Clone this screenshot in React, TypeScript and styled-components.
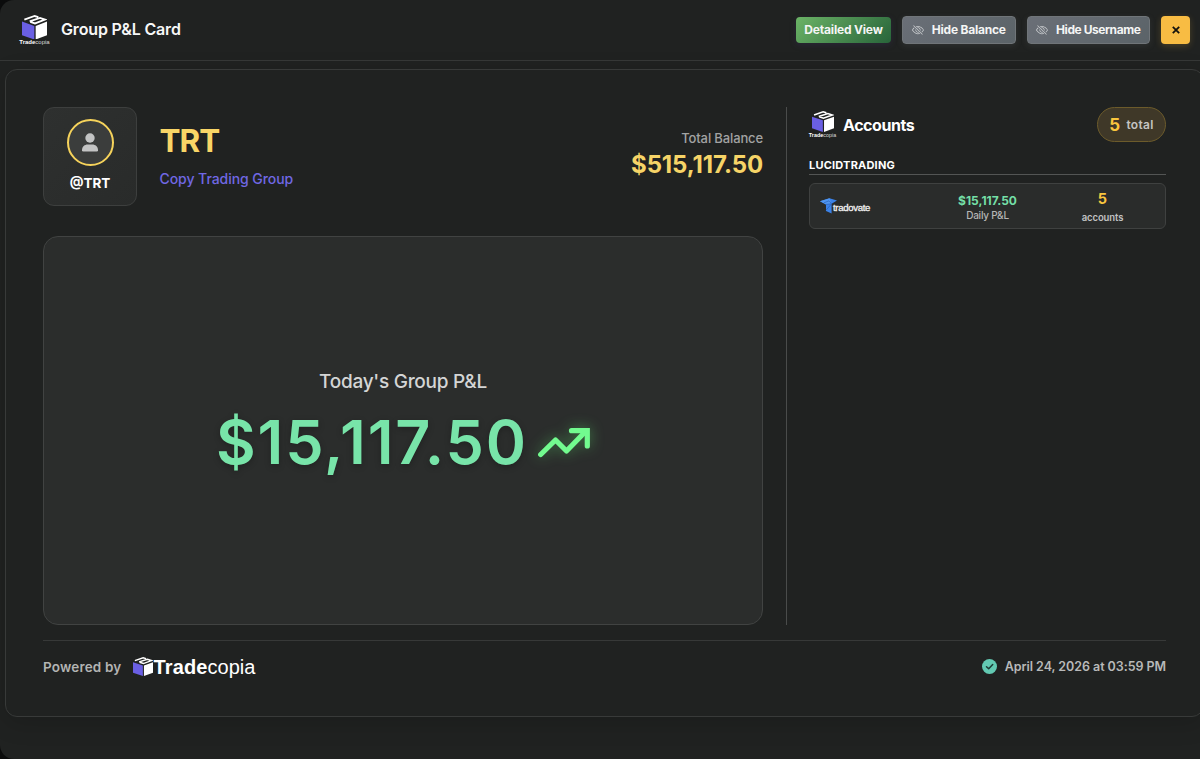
import React from "react";
import styled, { createGlobalStyle } from "styled-components";
import { BsEyeSlash } from "react-icons/bs";

const GlobalStyle = createGlobalStyle`
  * { box-sizing: border-box; }
  body {
    margin: 0;
    background: #0b0c0c;
    font-family: Inter, "Liberation Sans", sans-serif;
    -webkit-font-smoothing: antialiased;
  }
`;

const Modal = styled.div`
  width: 1200px;
  height: 759px;
  display: flex;
  flex-direction: column;
  overflow: hidden;
  background: #202221;
  border-radius: 14px 0 0 14px;
`;

const Header = styled.header`
  height: 61px;
  flex: none;
  display: flex;
  align-items: center;
  justify-content: space-between;
  padding: 0 10px 0 19px;
  border-bottom: 1px solid #363837;
`;

const TitleGroup = styled.div`
  display: flex;
  align-items: center;
  gap: 11px;
`;

const Title = styled.h1`
  margin: 0 0 2px;
  font-size: 16px;
  line-height: 20px;
  font-weight: 600;
  letter-spacing: -0.16px;
  color: #f7f7f7;
`;

const LogoBox = styled.div<{ $width: number }>`
  width: ${(p) => p.$width}px;
  display: flex;
  flex-direction: column;
  align-items: center;
`;

const LogoName = styled.span<{ $size: number }>`
  font: 400 ${(p) => p.$size}px/6px "Liberation Sans", sans-serif;
  color: #dadada;
  white-space: nowrap;
  b { font-weight: 700; color: #fff; }
`;

const Actions = styled.div`
  display: flex;
  align-items: center;
  gap: 11px;
`;

const Button = styled.button`
  height: 28px;
  padding: 0;
  display: flex;
  align-items: center;
  justify-content: center;
  border: 0;
  border-radius: 4px;
  font: 650 12px/16px Inter, sans-serif;
  color: #f4f5f4;
  white-space: nowrap;
`;

const DetailButton = styled(Button)`
  width: 95px;
  height: 26px;
  letter-spacing: -0.18px;
  background: linear-gradient(135deg, #6bb366 0%, #28643a 100%);
  box-shadow: 0 2px 6px rgba(70, 50, 120, 0.25);
`;

const ToggleButton = styled(Button)<{ $width: number; $tracking: number }>`
  width: ${(p) => p.$width}px;
  gap: 8px;
  letter-spacing: ${(p) => p.$tracking}px;
  border: 1px solid #707579;
  background: linear-gradient(135deg, #6a6f77, #5b6368);
  box-shadow: 0 2px 6px rgba(110, 115, 120, 0.18);
  svg { color: #c9cccf; }
`;

const CloseButton = styled(Button)`
  width: 29px;
  background: #f8bc43;
  box-shadow: 0 2px 7px rgba(248, 188, 67, 0.2);
`;

const Card = styled.main`
  width: 1199px;
  height: 648px;
  flex: none;
  margin: 8px 0 0 5px;
  padding: 37px 37px 0;
  display: flex;
  flex-direction: column;
  border: 1px solid #383a39;
  border-radius: 12px;
  background: #202221;
  box-shadow: 0 6px 24px rgba(0, 0, 0, 0.16);
`;

const Columns = styled.div`
  height: 518px;
  flex: none;
  display: grid;
  grid-template-columns: 744px 357px;
  column-gap: 22px;
`;

const Summary = styled.section`
  display: flex;
  flex-direction: column;
  gap: 30px;
  padding-right: 23px;
  border-right: 1px solid #4a4c4b;
`;

const GroupHeader = styled.div`
  height: 99px;
  display: flex;
`;

const UserCard = styled.div`
  width: 94px;
  display: flex;
  flex-direction: column;
  align-items: center;
  padding-top: 11px;
  border: 1px solid #3d3f3e;
  border-radius: 11px;
  background: linear-gradient(135deg, #2e302f, #292b2a);
`;

const Avatar = styled.div`
  width: 47px;
  height: 47px;
  display: flex;
  align-items: center;
  justify-content: center;
  border: 2px solid #f6d35b;
  border-radius: 50%;
  background: #3b3d3c;
`;

const Handle = styled.span`
  margin-top: 8px;
  font-size: 13.5px;
  line-height: 18px;
  font-weight: 700;
  color: #fff;
`;

const GroupInfo = styled.div`
  flex: 1;
  padding: 14px 0 0 22.5px;
`;

const GroupName = styled.h2`
  margin: 0;
  font-size: 31.5px;
  line-height: 40px;
  font-weight: 650;
  letter-spacing: -1px;
  color: #f9d566;
`;

const GroupType = styled.div`
  margin-top: 9px;
  font-size: 14px;
  line-height: 18px;
  font-weight: 550;
  letter-spacing: -0.06px;
  color: #7068e4;
`;

const Balance = styled.div`
  padding-top: 22px;
  text-align: right;
`;

const BalanceLabel = styled.div`
  font-size: 13px;
  line-height: 18px;
  font-weight: 550;
  letter-spacing: -0.13px;
  color: #a2a3a3;
`;

const BalanceValue = styled.div`
  margin-top: 4px;
  font-size: 24px;
  line-height: 28px;
  font-weight: 650;
  letter-spacing: -0.1px;
  color: #f6d467;
`;

const PnlPanel = styled.div`
  flex: 1;
  display: flex;
  flex-direction: column;
  align-items: center;
  padding-top: 132px;
  border: 1px solid #414342;
  border-radius: 15px;
  background: #2b2d2c;
`;

const PnlLabel = styled.div`
  font-size: 19px;
  line-height: 26px;
  font-weight: 550;
  letter-spacing: -0.27px;
  color: #d4d5d5;
`;

const PnlRow = styled.div`
  height: 72px;
  margin-top: 11px;
  display: flex;
  align-items: center;
  gap: 10px;
`;

const PnlValue = styled.span`
  font-size: 61px;
  line-height: 72px;
  font-weight: 640;
  letter-spacing: 1.9px;
  color: #78e4a9;
  text-shadow: 0 2px 6px rgba(0, 0, 0, 0.25);
`;

const TrendSvg = styled.svg`
  overflow: visible;
  filter: drop-shadow(0 0 7px rgba(100, 255, 120, 0.4));
`;

const Accounts = styled.section`
  display: flex;
  flex-direction: column;
`;

const AccountsHeader = styled.div`
  height: 35px;
  display: flex;
  align-items: center;
  justify-content: space-between;
`;

const AccountsTitleGroup = styled.div`
  display: flex;
  align-items: center;
  gap: 7px;
`;

const AccountsTitle = styled.h3`
  margin: 0;
  font-size: 16px;
  line-height: 20px;
  font-weight: 650;
  letter-spacing: -0.45px;
  color: #fff;
`;

const TotalPill = styled.div`
  width: 69px;
  height: 35px;
  display: flex;
  align-items: center;
  justify-content: center;
  gap: 6px;
  border: 1px solid #6c5b2b;
  border-radius: 18px;
  background: #3f3828;
  font-size: 12px;
  font-weight: 600;
  letter-spacing: 0.3px;
  color: #c5c4c1;
  b { font-size: 17px; font-weight: 700; color: #fac63e; }
`;

const FirmName = styled.div`
  height: 33px;
  padding-top: 15px;
  border-bottom: 1px solid #535554;
  font-size: 11px;
  line-height: 16px;
  font-weight: 700;
  letter-spacing: 0.2px;
  color: #fff;
`;

const AccountRow = styled.div`
  height: 46px;
  margin-top: 8px;
  padding: 0 10px;
  display: grid;
  grid-template-columns: 110px 115px 115px;
  align-items: center;
  border: 1px solid #3f4140;
  border-radius: 6px;
  background: #2a2c2b;
`;

const Broker = styled.div`
  display: flex;
  align-items: center;
`;

const BrokerName = styled.span`
  margin: 3px 0 0 -4px;
  font: 400 9.6px/12px "Liberation Sans", sans-serif;
  letter-spacing: -0.32px;
  color: #f2f2f2;
  -webkit-text-stroke: 0.3px #f2f2f2;
`;

const Stat = styled.div`
  display: flex;
  flex-direction: column;
  align-items: center;
`;

const DailyValue = styled.span`
  margin-top: 2px;
  font-size: 12px;
  line-height: 16px;
  font-weight: 700;
  color: #74dfa6;
`;

const DailyLabel = styled.span`
  font-size: 10px;
  line-height: 13px;
  font-weight: 450;
  letter-spacing: -0.23px;
  color: #b4b5b5;
`;

const CountValue = styled.span`
  margin-top: 3px;
  font-size: 14.5px;
  line-height: 18px;
  font-weight: 700;
  color: #fac63e;
`;

const CountLabel = styled.span`
  margin-top: 3px;
  font-size: 9.5px;
  line-height: 14px;
  font-weight: 600;
  letter-spacing: -0.1px;
  color: #c0c1c1;
`;

const Footer = styled.footer`
  height: 52px;
  flex: none;
  margin-top: 15px;
  display: flex;
  align-items: center;
  justify-content: space-between;
  border-top: 1px solid #373938;
`;

const Powered = styled.div`
  display: flex;
  align-items: center;
  font-size: 13.5px;
  font-weight: 600;
  letter-spacing: 0.17px;
  color: #b3b4b3;
  svg { margin-left: 12px; }
`;

const Wordmark = styled.span`
  font: 400 20px/24px "Liberation Sans", sans-serif;
  letter-spacing: 0;
  color: #fff;
  b { font-weight: 700; letter-spacing: 0.15px; }
`;

const Timestamp = styled.div`
  display: flex;
  align-items: center;
  gap: 8px;
  font-size: 12.5px;
  font-weight: 600;
  letter-spacing: -0.05px;
  color: #b8b9b9;
`;

function Cube({ width, height }: { width: number; height: number }) {
  return (
    <svg width={width} height={height} viewBox="0 0 75 74" preserveAspectRatio="none">
      <path d="M0 20 37 33V74L0 61Z" fill="#6a5fe3" />
      <path d="M41 33 75 20V61L41 74Z" fill="#fff" />
      <path d="M7 14 38 3 49 6.5M23 19 54 9 69 14 39 25.5 25 20.5" fill="none" stroke="#fff" strokeWidth="5.6" />
    </svg>
  );
}

function StackedLogo({ width, cube, cubeHeight, size }: { width: number; cube: number; cubeHeight: number; size: number }) {
  return (
    <LogoBox $width={width}>
      <Cube width={cube} height={cubeHeight} />
      <LogoName $size={size}><b>Trade</b>copia</LogoName>
    </LogoBox>
  );
}

function TrendIcon() {
  return (
    <TrendSvg width="52" height="31" viewBox="0 0 52 31" fill="none" stroke="#72fb8f" strokeWidth="5.2" strokeLinecap="round" strokeLinejoin="miter">
      <path d="M2.7 27.5 17.5 13 28.5 24 48 4" strokeLinejoin="round" />
      <path d="M33.5 3.7H49.3V19" />
    </TrendSvg>
  );
}

export default function App() {
  return (
    <>
      <GlobalStyle />
      <Modal>
        <Header>
          <TitleGroup>
            <StackedLogo width={31} cube={25} cubeHeight={24.5} size={6} />
            <Title>Group P&amp;L Card</Title>
          </TitleGroup>
          <Actions>
            <DetailButton>Detailed View</DetailButton>
            <ToggleButton $width={113.5} $tracking={-0.22}><BsEyeSlash size={12} />Hide Balance</ToggleButton>
            <ToggleButton $width={123.5} $tracking={-0.42}><BsEyeSlash size={12} />Hide Username</ToggleButton>
            <CloseButton aria-label="Close">
              <svg width="8" height="8" viewBox="0 0 8 8" stroke="#15130d" strokeWidth="1.8"><path d="M.8.8 7.2 7.2M7.2.8.8 7.2" /></svg>
            </CloseButton>
          </Actions>
        </Header>
        <Card>
          <Columns>
            <Summary>
              <GroupHeader>
                <UserCard>
                  <Avatar>
                    <svg width="16" height="19" viewBox="0 0 16 19" fill="#c3c4c4">
                      <circle cx="8" cy="5" r="4.7" />
                      <path d="M0 17.2C0 13.5 2.6 11.4 5.7 11.4H10.3C13.4 11.4 16 13.5 16 17.2Q16 18.5 14.7 18.5H1.3Q0 18.5 0 17.2Z" />
                    </svg>
                  </Avatar>
                  <Handle>@TRT</Handle>
                </UserCard>
                <GroupInfo>
                  <GroupName>TRT</GroupName>
                  <GroupType>Copy Trading Group</GroupType>
                </GroupInfo>
                <Balance>
                  <BalanceLabel>Total Balance</BalanceLabel>
                  <BalanceValue>$515,117.50</BalanceValue>
                </Balance>
              </GroupHeader>
              <PnlPanel>
                <PnlLabel>Today's Group P&amp;L</PnlLabel>
                <PnlRow>
                  <PnlValue>$15,117.50</PnlValue>
                  <TrendIcon />
                </PnlRow>
              </PnlPanel>
            </Summary>
            <Accounts>
              <AccountsHeader>
                <AccountsTitleGroup>
                  <StackedLogo width={27} cube={22} cubeHeight={21} size={5.4} />
                  <AccountsTitle>Accounts</AccountsTitle>
                </AccountsTitleGroup>
                <TotalPill><b>5</b>total</TotalPill>
              </AccountsHeader>
              <FirmName>LUCIDTRADING</FirmName>
              <AccountRow>
                <Broker>
                  <svg width="17" height="16" viewBox="0 0 17 16">
                    <path d="M0 3.2 9.5 0.3 17 2.6 11.6 5.8V15.5L6 13V6.4Z" fill="#3b82e8" />
                    <path d="M0 3.2 9.5.3 11.6 5.8 6 6.4Z" fill="#4f96f2" />
                    <path d="M6 6.4 11.6 5.8 6 12.2M4 4.8 9 2.8 11.6 5.8" fill="none" stroke="#2459ae" strokeWidth=".6" />
                  </svg>
                  <BrokerName>tradovate</BrokerName>
                </Broker>
                <Stat>
                  <DailyValue>$15,117.50</DailyValue>
                  <DailyLabel>Daily P&amp;L</DailyLabel>
                </Stat>
                <Stat>
                  <CountValue>5</CountValue>
                  <CountLabel>accounts</CountLabel>
                </Stat>
              </AccountRow>
            </Accounts>
          </Columns>
          <Footer>
            <Powered>
              Powered by
              <Cube width={20} height={19} />
              <Wordmark><b>Trade</b>copia</Wordmark>
            </Powered>
            <Timestamp>
              <svg width="15" height="15" viewBox="0 0 15 15">
                <circle cx="7.5" cy="7.5" r="7.5" fill="#62c9b2" />
                <path d="M4.5 7.7 6.7 9.8 10.7 5.5" fill="none" stroke="#1d3c36" strokeWidth="1.5" strokeLinecap="round" strokeLinejoin="round" />
              </svg>
              April 24, 2026 at 03:59 PM
            </Timestamp>
          </Footer>
        </Card>
      </Modal>
    </>
  );
}
